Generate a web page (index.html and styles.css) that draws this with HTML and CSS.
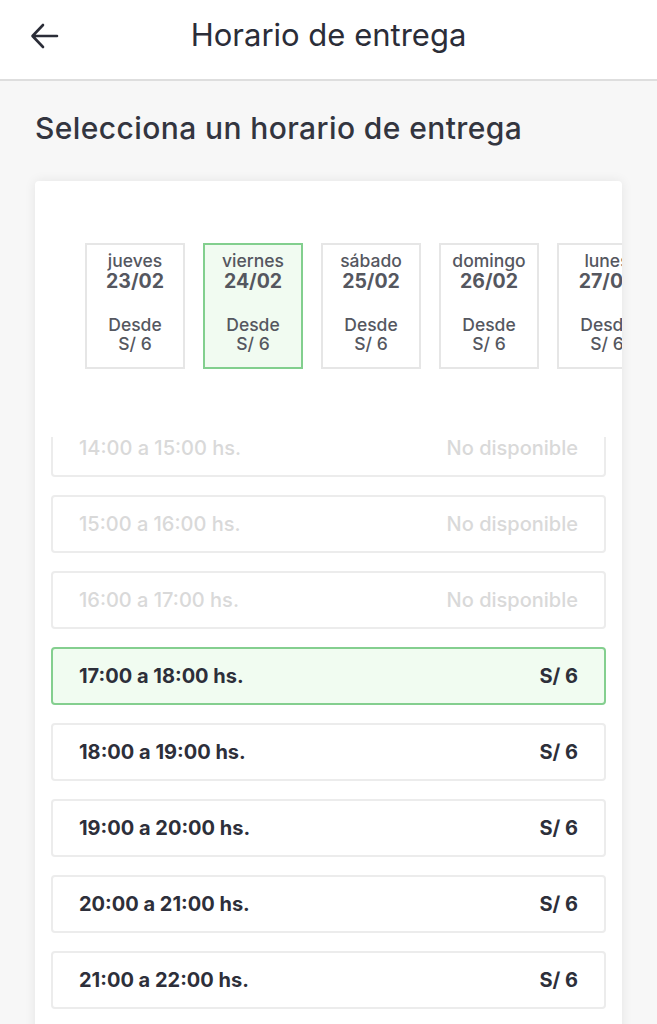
FILE: index.html
```html
<!DOCTYPE html>
<html lang="es">
<head>
<meta charset="utf-8">
<title>Horario de entrega</title>
<link rel="stylesheet" href="styles.css">
</head>
<body>
<header class="topbar">
  <button class="back" aria-label="Volver">
    <svg width="30" height="26" viewBox="0 0 30 26" fill="none" stroke="#2b2d38" stroke-width="2.6" stroke-linecap="round" stroke-linejoin="round"><path d="M27 13H3M13 2L2.5 13 13 24"/></svg>
  </button>
  <h1 class="topbar-title">Horario de entrega</h1>
</header>
<main class="content">
  <h2 class="heading">Selecciona un horario de entrega</h2>
  <section class="card">
    <div class="days">
      <div class="day"><span class="day-name">jueves</span><span class="day-date">23/02</span><span class="day-from">Desde</span><span class="day-price">S/ 6</span></div>
      <div class="day selected"><span class="day-name">viernes</span><span class="day-date">24/02</span><span class="day-from">Desde</span><span class="day-price">S/ 6</span></div>
      <div class="day"><span class="day-name">sábado</span><span class="day-date">25/02</span><span class="day-from">Desde</span><span class="day-price">S/ 6</span></div>
      <div class="day"><span class="day-name">domingo</span><span class="day-date">26/02</span><span class="day-from">Desde</span><span class="day-price">S/ 6</span></div>
      <div class="day"><span class="day-name">lunes</span><span class="day-date">27/02</span><span class="day-from">Desde</span><span class="day-price">S/ 6</span></div>
    </div>
    <div class="slots-view">
      <ul class="slots">
        <li class="slot disabled"><span>14:00 a 15:00 hs.</span><span>No disponible</span></li>
        <li class="slot disabled"><span>15:00 a 16:00 hs.</span><span>No disponible</span></li>
        <li class="slot disabled"><span>16:00 a 17:00 hs.</span><span>No disponible</span></li>
        <li class="slot selected"><span>17:00 a 18:00 hs.</span><span>S/ 6</span></li>
        <li class="slot"><span>18:00 a 19:00 hs.</span><span>S/ 6</span></li>
        <li class="slot"><span>19:00 a 20:00 hs.</span><span>S/ 6</span></li>
        <li class="slot"><span>20:00 a 21:00 hs.</span><span>S/ 6</span></li>
        <li class="slot"><span>21:00 a 22:00 hs.</span><span>S/ 6</span></li>
        <li class="slot"><span>22:00 a 23:00 hs.</span><span>S/ 6</span></li>
      </ul>
    </div>
  </section>
</main>
</body>
</html>
```
FILE: styles.css
```css
* { box-sizing: border-box; }
html, body { margin: 0; padding: 0; }
body {
  font-family: Inter, "Open Sans", sans-serif;
  background: #f7f7f7;
  color: #2d2f3a;
  height: 1024px;
  overflow: hidden;
}
.topbar {
  height: 81px;
  background: #fff;
  border-bottom: 2px solid #dedede;
  display: flex;
  align-items: center;
  justify-content: center;
  position: relative;
}
.back {
  position: absolute;
  left: 30px;
  top: 23px;
  border: 0;
  background: none;
  padding: 0;
  width: 30px;
  height: 26px;
}
.back svg { display: block; }
.topbar-title {
  margin: 0;
  font-size: 31px;
  font-weight: 400;
  color: #2b2d38;
  padding-bottom: 10px;
}
.content { padding: 0 35px; }
.heading {
  margin: 0;
  padding-top: 29px;
  height: 100px;
  font-size: 30px;
  letter-spacing: 0.4px;
  font-weight: 500;
  color: #33353f;
  white-space: nowrap;
}
.card {
  background: #fff;
  border-radius: 4px;
  box-shadow: 0 0 12px rgba(0,0,0,0.08);
  height: 860px;
  overflow: hidden;
}
.days {
  display: flex;
  gap: 18px;
  padding: 62px 0 0 50px;
  height: 256px;
  overflow: hidden;
}
.day {
  flex: 0 0 100px;
  height: 126px;
  border: 2px solid #e6e6e6;
  display: flex;
  flex-direction: column;
  align-items: center;
  padding-top: 6px;
  color: #55575f;
  font-size: 17.5px;
  line-height: 20px;
}
.day.selected {
  border-color: #82cf8e;
  background: #f1fbf1;
}
.day-name { font-weight: 500; }
.day-date { font-weight: 700; font-size: 19.5px; line-height: 21px; }
.day-from { margin-top: 23px; font-weight: 500; line-height: 19px; }
.day-price { font-weight: 500; line-height: 19px; }
.slots-view {
  height: 600px;
  overflow: hidden;
  padding: 0 16px;
}
.slots {
  list-style: none;
  margin: -18px 0 0;
  padding: 0;
  display: flex;
  flex-direction: column;
  gap: 18px;
}
.slot {
  height: 58px;
  border: 2px solid #ececec;
  border-radius: 4px;
  display: flex;
  align-items: center;
  justify-content: space-between;
  padding: 0 26px;
  font-size: 20px;
  font-weight: 700;
  color: #2d2f3a;
}
.slot.disabled {
  color: #d9d9d9;
  font-weight: 500;
}
.slot.selected {
  border-color: #84cf8f;
  background: #f1fcf1;
}
```
